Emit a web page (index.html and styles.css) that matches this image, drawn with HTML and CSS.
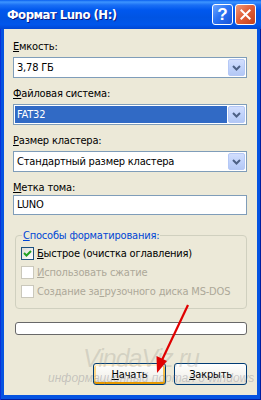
FILE: index.html
```html
<!DOCTYPE html>
<html lang="ru">

<head>
    <meta charset="UTF-8">
    <meta name="viewport" content="width=device-width, initial-scale=1.0">
    <title>Формат Luno (H:)</title>
    <link rel="stylesheet" href="styles.css">
</head>

<body>
    <div class="window">
        <div class="titlebar">
            <span class="title">Формат Luno (H:)</span>
            <span class="caption-btn help">?</span>
            <span class="caption-btn close">
                <svg width="21" height="21" viewBox="0 0 21 21">
                    <path d="M6 6 L15 15 M15 6 L6 15" stroke="#fff" stroke-width="2.2" stroke-linecap="square" fill="none"/>
                </svg>
            </span>
        </div>

        <div class="client">
            <div class="field">
                <label class="label"><u>Е</u>мкость:</label>
                <div class="combo">
                    <span class="combo-text">3,78 ГБ</span>
                    <span class="combo-arrow">
                        <svg width="17" height="17" viewBox="0 0 17 17"><path d="M5 7 L8.5 10.5 L12 7" stroke="#4d6185" stroke-width="2" fill="none"/></svg>
                    </span>
                </div>
            </div>
            <div class="field">
                <label class="label"><u>Ф</u>айловая система:</label>
                <div class="combo">
                    <span class="combo-text selected">FAT32</span>
                    <span class="combo-arrow">
                        <svg width="17" height="17" viewBox="0 0 17 17"><path d="M5 7 L8.5 10.5 L12 7" stroke="#4d6185" stroke-width="2" fill="none"/></svg>
                    </span>
                </div>
            </div>
            <div class="field">
                <label class="label"><u>Р</u>азмер кластера:</label>
                <div class="combo">
                    <span class="combo-text">Стандартный размер кластера</span>
                    <span class="combo-arrow">
                        <svg width="17" height="17" viewBox="0 0 17 17"><path d="M5 7 L8.5 10.5 L12 7" stroke="#4d6185" stroke-width="2" fill="none"/></svg>
                    </span>
                </div>
            </div>
            <div class="field">
                <label class="label label-tight"><u>М</u>етка тома:</label>
                <div class="textbox">LUNO</div>
            </div>

            <fieldset class="group">
                <legend><u>С</u>пособы форматирования:</legend>
                <div class="check-row">
                    <span class="check checked">
                        <svg width="11" height="11" viewBox="0 0 11 11"><path d="M2 5 L4.5 7.5 L9 3" stroke="#21a121" stroke-width="2" fill="none"/></svg>
                    </span>
                    <span><u>Б</u>ыстрое (очистка оглавления)</span>
                </div>
                <div class="check-row disabled">
                    <span class="check"></span>
                    <span><u>И</u>спользовать сжатие</span>
                </div>
                <div class="check-row disabled">
                    <span class="check"></span>
                    <span>Создание за<u>г</u>рузочного диска MS-DOS</span>
                </div>
            </fieldset>

            <div class="progress"></div>

            <div class="buttons">
                <button class="btn hot"><u>Н</u>ачать</button>
                <button class="btn"><u>З</u>акрыть</button>
            </div>
        </div>

        <div class="watermark">
            <div class="wm-big">VindaViz.ru</div>
            <div class="wm-small">информационный портал о windows</div>
        </div>

        <svg class="annotation" width="261" height="400" viewBox="0 0 261 400">
            <path d="M188 305 L162 360" stroke="#e00000" stroke-width="2.2" fill="none"/>
            <path d="M157 373 L156.5 356 L167 361 Z" fill="#e00000"/>
        </svg>
    </div>
</body>

</html>
```

FILE: styles.css
```css
* {
    box-sizing: border-box;
}

body {
    margin: 0;
    background-color: #ffffff;
    font-family: "DejaVu Sans Condensed", "DejaVu Sans", sans-serif;
    font-stretch: condensed;
    font-size: 11px;
    letter-spacing: -0.2px;
    color: #000000;
}

.window {
    position: relative;
    width: 261px;
    height: 400px;
    display: flex;
    flex-direction: column;
    background-color: #0553e1;
    box-shadow: inset 1px 0 0 #0831d9, inset -1px 0 0 #001ea0, inset 0 -1px 0 #001ea0;
}

.titlebar {
    height: 29px;
    display: flex;
    align-items: center;
    gap: 2px;
    padding: 0 5px 0 7px;
    background: linear-gradient(to bottom, #0a5fef 0, #3d95ff 2px, #1a6ff5 5px, #0058ee 10px, #0054e3 60%, #0056eb 85%, #0047d4 100%);
}

.title {
    flex: 1;
    color: #ffffff;
    font-weight: bold;
    font-size: 13px;
    letter-spacing: -0.5px;
    text-shadow: 1px 1px 0 #0a1883;
}

.caption-btn {
    width: 21px;
    height: 21px;
    border: 1px solid #ffffff;
    border-radius: 3px;
    display: flex;
    align-items: center;
    justify-content: center;
}

.help {
    background: linear-gradient(135deg, #6ea5ff 0%, #2b74f4 45%, #1853d8 100%);
    color: #ffffff;
    font-family: "Liberation Sans", sans-serif;
    font-weight: bold;
    font-size: 17px;
    letter-spacing: 0;
}

.close {
    background: linear-gradient(135deg, #f09a7a 0%, #e1603a 45%, #c3401b 100%);
}

.client {
    flex: 1;
    margin: 0 4px 5px 4px;
    padding: 11px 10px 0 9px;
    background-color: #ece9d8;
}

.label {
    display: block;
    line-height: 13px;
    margin-bottom: 4px;
}

.label-tight {
    margin-bottom: 1px;
}

.combo {
    height: 21px;
    margin-bottom: 9px;
    padding: 1px;
    border: 1px solid #7f9db9;
    background-color: #ffffff;
    display: flex;
}

.combo-text {
    flex: 1;
    height: 17px;
    line-height: 17px;
    padding-left: 2px;
}

.combo-text.selected {
    background-color: #316ac5;
    color: #ffffff;
    margin-right: 1px;
}

.combo-arrow {
    width: 17px;
    height: 17px;
    border: 1px solid #b5c8f6;
    border-radius: 2px;
    background: linear-gradient(to bottom, #d2defd 0%, #c1d3fb 50%, #b3c8f5 100%);
    display: flex;
}

.combo-arrow svg {
    margin: -1px;
}

.textbox {
    height: 20px;
    line-height: 18px;
    padding-left: 3px;
    border: 1px solid #7f9db9;
    background-color: #ffffff;
}

.group {
    margin: 14px 0 0 2px;
    padding: 2px 0 7px 5px;
    border: 1px solid #d0d0bf;
    border-radius: 4px;
    min-width: 0;
}

.group legend {
    margin-left: 1px;
    padding: 0 1px;
    line-height: 13px;
    color: #0046d5;
}

.check-row {
    height: 19px;
    display: flex;
    align-items: center;
    gap: 3px;
}

.check {
    width: 13px;
    height: 13px;
    border: 1px solid #1c5180;
    background: linear-gradient(135deg, #dcdcd7 0%, #ffffff 100%);
}

.check-row.disabled {
    color: #aca899;
}

.check-row.disabled .check {
    border-color: #cac8bb;
    background: #ffffff;
}

.progress {
    height: 13px;
    margin: 13px 0 0 2px;
    border: 1px solid #686868;
    border-radius: 3px;
    background-color: #ffffff;
}

.buttons {
    margin-top: 28px;
    display: flex;
    justify-content: flex-end;
    gap: 8px;
}

.btn {
    width: 73px;
    height: 22px;
    padding: 0;
    border: 1px solid #003c74;
    border-radius: 3px;
    background: linear-gradient(to bottom, #ffffff 0%, #f4f3ee 60%, #e3e0d4 100%);
    font-family: inherit;
    font-size: 11px;
    letter-spacing: inherit;
    color: #000000;
}

.btn.hot {
    box-shadow: inset 0 2px 0 #fff0cf, inset 0 -2px 0 #e59700, inset 2px 0 0 #fbd88a, inset -2px 0 0 #f5c04f;
}

.watermark {
    position: absolute;
    left: 0;
    top: 344px;
    width: 261px;
    pointer-events: none;
    font-family: "Liberation Sans", sans-serif;
    font-style: italic;
    letter-spacing: 0;
}

.wm-big {
    margin-left: 83px;
    font-size: 25px;
    line-height: 28px;
    letter-spacing: -1px;
    color: rgba(150, 148, 140, 0.28);
}

.wm-small {
    margin: -1px 0 0 48px;
    font-size: 12px;
    line-height: 14px;
    color: rgba(120, 120, 135, 0.35);
}

.annotation {
    position: absolute;
    left: 0;
    top: 0;
    pointer-events: none;
}
```
